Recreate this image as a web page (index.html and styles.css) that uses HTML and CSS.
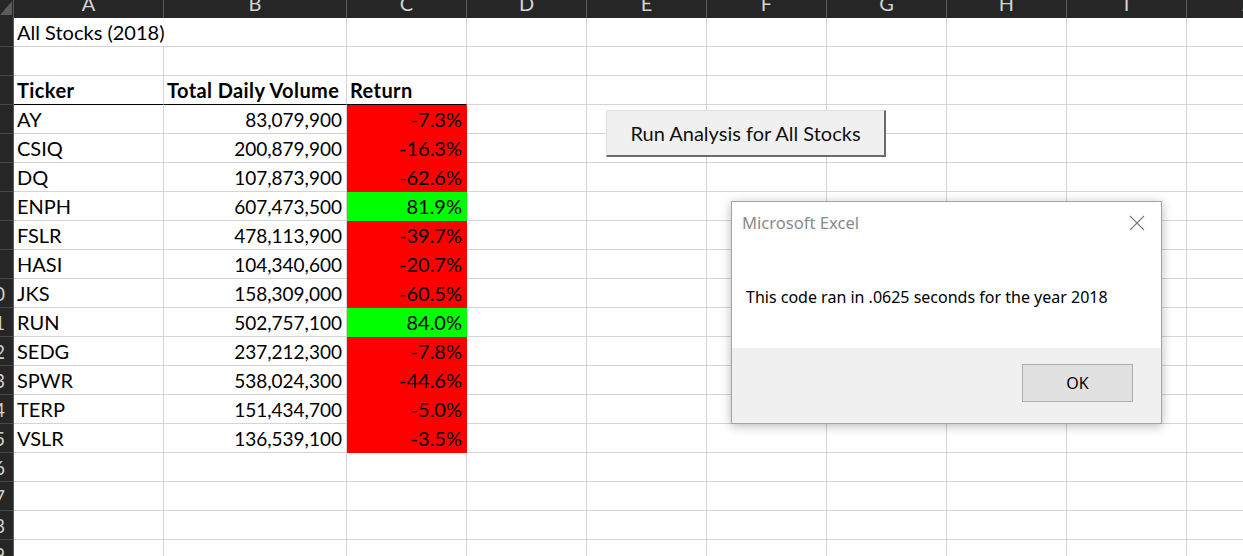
FILE: index.html
```html
<!DOCTYPE html>
<html lang="en">
<head>
<meta charset="utf-8">
<title>All Stocks (2018)</title>
<link rel="stylesheet" href="styles.css">
</head>
<body>
<div class="app">
  <div class="sheet">
    <div class="row hdr">
      <div class="corner"><svg width="13" height="17" viewBox="0 0 13 17"><polygon points="12,1 12,15 0,15" fill="#5c5c5c"/></svg></div>
      <div class="ch"><span>A</span></div>
      <div class="ch"><span>B</span></div>
      <div class="ch"><span>C</span></div>
      <div class="ch"><span>D</span></div>
      <div class="ch"><span>E</span></div>
      <div class="ch"><span>F</span></div>
      <div class="ch"><span>G</span></div>
      <div class="ch"><span>H</span></div>
      <div class="ch"><span>I</span></div>
      <div class="ch"><span>J</span></div>
    </div>
    <div class="row r1">
      <div class="rh"><span>1</span></div>
      <div class="c span2">All Stocks (2018)</div>
      <div class="c"></div><div class="c"></div><div class="c"></div><div class="c"></div><div class="c"></div><div class="c"></div><div class="c"></div><div class="c"></div>
    </div>
    <div class="row">
      <div class="rh"><span>2</span></div>
      <div class="c"></div><div class="c"></div>
      <div class="c"></div><div class="c"></div><div class="c"></div><div class="c"></div><div class="c"></div><div class="c"></div><div class="c"></div><div class="c"></div>
    </div>
    <div class="row">
      <div class="rh"><span>3</span></div>
      <div class="c b hb">Ticker</div><div class="c b hb">Total Daily Volume</div><div class="c b hb">Return</div>
      <div class="c"></div><div class="c"></div><div class="c"></div><div class="c"></div><div class="c"></div><div class="c"></div><div class="c"></div>
    </div>
    <div class="row">
      <div class="rh"><span>4</span></div>
      <div class="c">AY</div><div class="c num vol">83,079,900</div><div class="c num rd">-7.3%</div>
      <div class="c"></div><div class="c"></div><div class="c"></div><div class="c"></div><div class="c"></div><div class="c"></div><div class="c"></div>
    </div>
    <div class="row">
      <div class="rh"><span>5</span></div>
      <div class="c">CSIQ</div><div class="c num vol">200,879,900</div><div class="c num rd">-16.3%</div>
      <div class="c"></div><div class="c"></div><div class="c"></div><div class="c"></div><div class="c"></div><div class="c"></div><div class="c"></div>
    </div>
    <div class="row">
      <div class="rh"><span>6</span></div>
      <div class="c">DQ</div><div class="c num vol">107,873,900</div><div class="c num rd">-62.6%</div>
      <div class="c"></div><div class="c"></div><div class="c"></div><div class="c"></div><div class="c"></div><div class="c"></div><div class="c"></div>
    </div>
    <div class="row">
      <div class="rh"><span>7</span></div>
      <div class="c">ENPH</div><div class="c num vol">607,473,500</div><div class="c num gr">81.9%</div>
      <div class="c"></div><div class="c"></div><div class="c"></div><div class="c"></div><div class="c"></div><div class="c"></div><div class="c"></div>
    </div>
    <div class="row">
      <div class="rh"><span>8</span></div>
      <div class="c">FSLR</div><div class="c num vol">478,113,900</div><div class="c num rd">-39.7%</div>
      <div class="c"></div><div class="c"></div><div class="c"></div><div class="c"></div><div class="c"></div><div class="c"></div><div class="c"></div>
    </div>
    <div class="row">
      <div class="rh"><span>9</span></div>
      <div class="c">HASI</div><div class="c num vol">104,340,600</div><div class="c num rd">-20.7%</div>
      <div class="c"></div><div class="c"></div><div class="c"></div><div class="c"></div><div class="c"></div><div class="c"></div><div class="c"></div>
    </div>
    <div class="row">
      <div class="rh"><span>10</span></div>
      <div class="c">JKS</div><div class="c num vol">158,309,000</div><div class="c num rd">-60.5%</div>
      <div class="c"></div><div class="c"></div><div class="c"></div><div class="c"></div><div class="c"></div><div class="c"></div><div class="c"></div>
    </div>
    <div class="row">
      <div class="rh"><span>11</span></div>
      <div class="c">RUN</div><div class="c num vol">502,757,100</div><div class="c num gr">84.0%</div>
      <div class="c"></div><div class="c"></div><div class="c"></div><div class="c"></div><div class="c"></div><div class="c"></div><div class="c"></div>
    </div>
    <div class="row">
      <div class="rh"><span>12</span></div>
      <div class="c">SEDG</div><div class="c num vol">237,212,300</div><div class="c num rd">-7.8%</div>
      <div class="c"></div><div class="c"></div><div class="c"></div><div class="c"></div><div class="c"></div><div class="c"></div><div class="c"></div>
    </div>
    <div class="row">
      <div class="rh"><span>13</span></div>
      <div class="c">SPWR</div><div class="c num vol">538,024,300</div><div class="c num rd">-44.6%</div>
      <div class="c"></div><div class="c"></div><div class="c"></div><div class="c"></div><div class="c"></div><div class="c"></div><div class="c"></div>
    </div>
    <div class="row">
      <div class="rh"><span>14</span></div>
      <div class="c">TERP</div><div class="c num vol">151,434,700</div><div class="c num rd">-5.0%</div>
      <div class="c"></div><div class="c"></div><div class="c"></div><div class="c"></div><div class="c"></div><div class="c"></div><div class="c"></div>
    </div>
    <div class="row">
      <div class="rh"><span>15</span></div>
      <div class="c">VSLR</div><div class="c num vol">136,539,100</div><div class="c num rd">-3.5%</div>
      <div class="c"></div><div class="c"></div><div class="c"></div><div class="c"></div><div class="c"></div><div class="c"></div><div class="c"></div>
    </div>
    <div class="row">
      <div class="rh"><span>16</span></div>
      <div class="c"></div><div class="c"></div><div class="c"></div>
      <div class="c"></div><div class="c"></div><div class="c"></div><div class="c"></div><div class="c"></div><div class="c"></div><div class="c"></div>
    </div>
    <div class="row">
      <div class="rh"><span>17</span></div>
      <div class="c"></div><div class="c"></div><div class="c"></div>
      <div class="c"></div><div class="c"></div><div class="c"></div><div class="c"></div><div class="c"></div><div class="c"></div><div class="c"></div>
    </div>
    <div class="row">
      <div class="rh"><span>18</span></div>
      <div class="c"></div><div class="c"></div><div class="c"></div>
      <div class="c"></div><div class="c"></div><div class="c"></div><div class="c"></div><div class="c"></div><div class="c"></div><div class="c"></div>
    </div>
    <div class="row">
      <div class="rh"><span>19</span></div>
      <div class="c"></div><div class="c"></div><div class="c"></div>
      <div class="c"></div><div class="c"></div><div class="c"></div><div class="c"></div><div class="c"></div><div class="c"></div><div class="c"></div>
    </div>
  </div>

  <button class="run-btn" type="button">Run Analysis for All Stocks</button>

  <div class="dlg" role="dialog">
    <div class="dlg-body">
      <div class="dlg-title">
        <span>Microsoft Excel</span>
        <svg class="dlg-close" width="16" height="16" viewBox="0 0 16 16"><path d="M1 1L15 15M15 1L1 15" stroke="#7a7a7a" stroke-width="1.1" fill="none"/></svg>
      </div>
      <p class="dlg-msg">This code ran in .0625 seconds for the year 2018</p>
    </div>
    <div class="dlg-foot">
      <button class="ok-btn" type="button">OK</button>
    </div>
  </div>
</div>
</body>
</html>
```

FILE: styles.css
```css
* { box-sizing: border-box; }
html, body { margin: 0; padding: 0; background: #fff; }
.app {
  position: relative;
  width: 1243px;
  height: 556px;
  overflow: hidden;
  font-family: "Lato", "Liberation Sans", sans-serif;
}
.sheet { display: flex; flex-direction: column; width: 1307px; }
.row {
  display: grid;
  grid-template-columns: 14px 150px 183px repeat(8, 120px);
  height: 29px;
  flex: none;
}
.row.hdr { height: 18px; background: #262626; }

.corner {
  background: #262626;
  border-right: 1px solid #5a5a5a;
  overflow: hidden;
}
.corner svg { display: block; }
.ch {
  background: #262626;
  border-right: 1px solid #5a5a5a;
  overflow: hidden;
  text-align: center;
  color: #d4d4d4;
  font-size: 20px;
  line-height: 20px;
}
.ch span { display: block; margin-top: -7px; }

.rh {
  background: #262626;
  border-right: 1px solid #5a5a5a;
  border-bottom: 1px solid #484848;
  overflow: hidden;
  display: flex;
  justify-content: flex-end;
  align-items: flex-end;
}
.rh span {
  flex: none;
  width: 38px;
  text-align: center;
  color: #d0d0d0;
  font-size: 19px;
  line-height: 19px;
  padding-bottom: 4px;
}

.c {
  border-right: 1px solid #d4d4d4;
  border-bottom: 1px solid #d4d4d4;
  padding: 0 4px 4px 3px;
  display: flex;
  align-items: flex-end;
  font-size: 20px;
  line-height: 19px;
  color: #000;
  white-space: nowrap;
}
.c.span2 { grid-column: span 2; }
.c.num { justify-content: flex-end; }
.c.vol { font-size: 19px; }
.c.b { font-weight: 700; letter-spacing: 0.4px; }
.c.hb { border-bottom-color: #000; }
.c.rd { background: #ff0000; border-color: #ff0000; }
.c.gr { background: #00ff00; border-color: #00ff00; }

.run-btn {
  position: absolute;
  left: 606px;
  top: 110px;
  width: 280px;
  height: 47px;
  margin: 0;
  padding: 0;
  background: #f0f0f0;
  border-top: 1px solid #e0e0e0;
  border-left: 1px solid #e0e0e0;
  border-right: 2px solid #6a6a6a;
  border-bottom: 2px solid #6a6a6a;
  font-family: "Lato", "Liberation Sans", sans-serif;
  font-size: 20px;
  color: #111;
  display: flex;
  align-items: center;
  justify-content: center;
}

.dlg {
  position: absolute;
  left: 731px;
  top: 201px;
  width: 431px;
  height: 223px;
  background: #fff;
  border: 1px solid #a3a3a3;
  box-shadow: 0 2px 10px rgba(0, 0, 0, 0.28);
  display: flex;
  flex-direction: column;
  font-family: "Noto Sans", "Open Sans", sans-serif;
}
.dlg-body { flex: 1; }
.dlg-title {
  display: flex;
  justify-content: space-between;
  align-items: flex-start;
  padding: 10px 16px 0 10px;
  font-size: 16.6px;
  line-height: 22px;
  color: #8a8a8a;
}
.dlg-close { display: block; margin-top: 3px; }
.dlg-msg {
  margin: 52px 0 0 0;
  padding-left: 14px;
  font-size: 16px;
  line-height: 22px;
  color: #000;
}
.dlg-foot {
  flex: none;
  height: 75px;
  background: #f0f0f0;
  display: flex;
  justify-content: flex-end;
  align-items: flex-start;
  padding: 16px 28px 0 0;
}
.ok-btn {
  width: 111px;
  height: 38px;
  margin: 0;
  padding: 0;
  background: #e1e1e1;
  border: 1px solid #adadad;
  font-family: "Noto Sans", "Open Sans", sans-serif;
  font-size: 16px;
  color: #000;
}
```
